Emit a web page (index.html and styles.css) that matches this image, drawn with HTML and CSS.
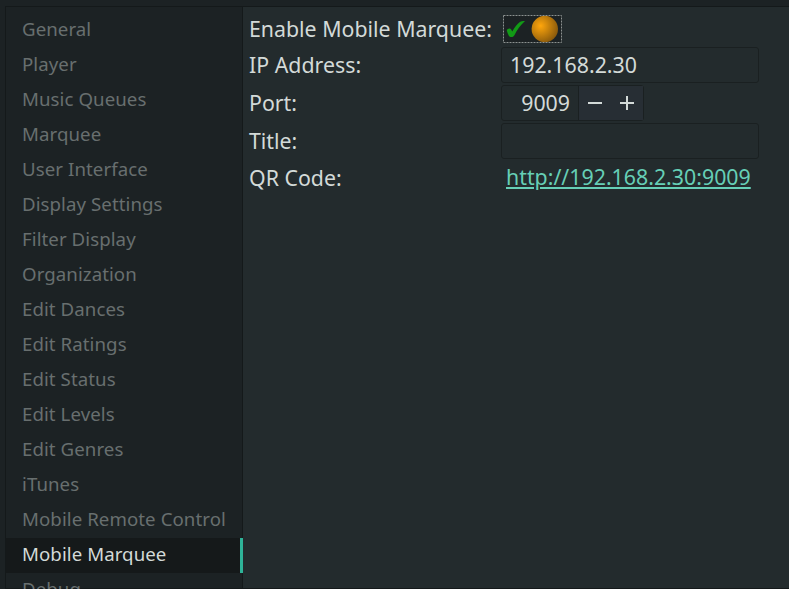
FILE: index.html
```html
<!DOCTYPE html>
<html lang="en">
<head>
<meta charset="utf-8">
<title>Configuration</title>
<link rel="stylesheet" href="styles.css">
</head>
<body>
<div class="notebook">
  <nav class="tabs">
    <div class="tab">General</div>
    <div class="tab">Player</div>
    <div class="tab">Music Queues</div>
    <div class="tab">Marquee</div>
    <div class="tab">User Interface</div>
    <div class="tab">Display Settings</div>
    <div class="tab">Filter Display</div>
    <div class="tab">Organization</div>
    <div class="tab">Edit Dances</div>
    <div class="tab">Edit Ratings</div>
    <div class="tab">Edit Status</div>
    <div class="tab">Edit Levels</div>
    <div class="tab">Edit Genres</div>
    <div class="tab">iTunes</div>
    <div class="tab">Mobile Remote Control</div>
    <div class="tab active">Mobile Marquee</div>
    <div class="tab">Debug</div>
  </nav>
  <main class="page">
    <div class="row row-switch">
      <span class="label">Enable Mobile Marquee:</span>
      <div class="switch">
        <svg width="59" height="28" viewBox="0 0 59 28">
          <defs>
            <radialGradient id="ball" cx="0.34" cy="0.38" r="0.68">
              <stop offset="0" stop-color="#ffa60c"/>
              <stop offset="1" stop-color="#8a5a0c"/>
            </radialGradient>
          </defs>
          <path d="M3.8 15.6C3.8 13.8 7.4 12.8 8.2 14.4L9.2 16.6C11.6 12.6 14.4 8.6 17.2 6.8C18.8 5.8 20.8 5.8 22 6.1C18 9.8 14.2 14.4 11.4 20.2C10.2 22.6 6.8 22.6 5.8 20.8C4.8 18.8 4.2 17.2 3.8 15.6Z" fill="#129a16"/>
          <circle cx="41.8" cy="14" r="13.2" fill="url(#ball)"/>
          <rect x="0.5" y="0.5" width="58" height="27" fill="none" stroke="#8c9291" stroke-dasharray="2 1"/>
        </svg>
      </div>
    </div>
    <div class="row">
      <span class="label">IP Address:</span>
      <div class="entry">192.168.2.30</div>
    </div>
    <div class="row">
      <span class="label">Port:</span>
      <div class="spin">
        <span class="value">9009</span>
        <span class="buttons">
          <svg width="65" height="34" viewBox="0 0 65 34"><path d="M9 17h14M41 17h14M48 10v14" stroke="#d3dad8" stroke-width="2" fill="none"/></svg>
        </span>
      </div>
    </div>
    <div class="row">
      <span class="label">Title:</span>
      <div class="entry"></div>
    </div>
    <div class="row row-link">
      <span class="label">QR Code:</span>
      <a class="link">http://192.168.2.30:9009</a>
    </div>
  </main>
</div>
</body>
</html>
```
FILE: styles.css
```css
* { box-sizing: border-box; }
body {
  margin: 0;
  height: 589px;
  overflow: hidden;
  background: #1c2224;
  color: #d3dad8;
  font: 21.33px "Noto Sans", sans-serif;
  padding: 6px 0 0 5px;
}
.notebook {
  display: flex;
  height: 583px;
  border: 1px solid #14191a;
  border-width: 1px 0 1px 1px;
}
.tabs {
  width: 237px;
  flex: none;
  padding-top: 6px;
  border-right: 1px solid #14191a;
  background: #1c2224;
}
.tab {
  height: 35px;
  line-height: 32px;
  padding-left: 16px;
  font-size: 18.67px;
  letter-spacing: 0.07px;
  white-space: nowrap;
  color: #686f6f;
}
.tab.active {
  position: relative;
  margin-right: -1px;
  background: #15191a;
  color: #d3dad8;
}
.tab.active::after {
  content: "";
  position: absolute;
  top: 0;
  right: 0;
  width: 3px;
  height: 35px;
  background: #2eb398;
}
.page {
  flex: 1;
  background: #232b2d;
  padding: 4px 0 0 6px;
}
.row {
  display: flex;
  align-items: center;
  height: 36px;
  margin-bottom: 2px;
}
.row-switch { height: 36px; margin-bottom: 0; }
.label { width: 252px; flex: none; white-space: nowrap; line-height: 30px; margin-top: -1px; }
.row-link { margin-top: -1px; }
.switch { height: 28px; margin-left: 2px; background: #1c2224; }
.switch svg, .buttons svg { display: block; }
.entry {
  width: 258px;
  height: 36px;
  border: 1px solid #1a2021;
  border-radius: 3px;
  line-height: 33px;
  padding-left: 8px;
}
.spin {
  display: flex;
  width: 143px;
  height: 36px;
  border: 1px solid #1a2021;
  border-radius: 3px;
}
.value {
  width: 77px;
  padding-right: 8px;
  text-align: right;
  line-height: 33px;
  border-right: 1px solid #1a2021;
}
.buttons { flex: 1; background: #272e34; overflow: hidden; }
.link {
  margin-left: 5px;
  margin-top: -4px;
  color: #66cfb6;
  text-decoration: underline;
}
```
